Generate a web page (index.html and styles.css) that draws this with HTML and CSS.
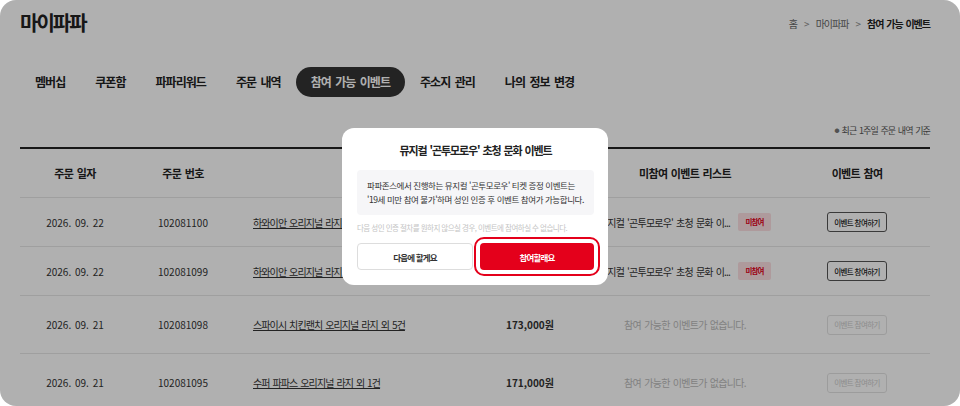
FILE: index.html
```html
<!DOCTYPE html>
<html lang="ko">
<head>
<meta charset="UTF-8">
<title>마이파파 - 참여 가능 이벤트</title>
<link rel="stylesheet" href="styles.css">
</head>
<body>
  <div class="screen">
    <div class="page">
      <div class="top">
        <h1>마이파파</h1>
        <div class="crumbs">
          <span>홈</span><i>&gt;</i><span>마이파파</span><i>&gt;</i><strong>참여 가능 이벤트</strong>
        </div>
      </div>

      <ul class="tabs">
        <li>멤버십</li>
        <li>쿠폰함</li>
        <li>파파리워드</li>
        <li>주문 내역</li>
        <li class="on">참여 가능 이벤트</li>
        <li>주소지 관리</li>
        <li>나의 정보 변경</li>
      </ul>

      <p class="note"><span class="dot">●</span>최근 1주일 주문 내역 기준</p>

      <div class="orders">
        <div class="row head">
          <div>주문 일자</div>
          <div>주문 번호</div>
          <div>주문 상품</div>
          <div>결제 금액</div>
          <div>미참여 이벤트 리스트</div>
          <div class="act">이벤트 참여</div>
        </div>
        <div class="row">
          <div>2026. 09. 22</div>
          <div>102081100</div>
          <div class="item"><a href="#">하와이안 오리지널 라지 외 2건</a></div>
          <div class="price">52,000원</div>
          <div class="event"><span class="ev-name">뮤지컬 '곤투모로우' 초청 문화 이...</span><span class="badge">미참여</span></div>
          <div class="act"><button class="join">이벤트 참여하기</button></div>
        </div>
        <div class="row">
          <div>2026. 09. 22</div>
          <div>102081099</div>
          <div class="item"><a href="#">하와이안 오리지널 라지 외 1건</a></div>
          <div class="price">48,000원</div>
          <div class="event"><span class="ev-name">뮤지컬 '곤투모로우' 초청 문화 이...</span><span class="badge">미참여</span></div>
          <div class="act"><button class="join">이벤트 참여하기</button></div>
        </div>
        <div class="row empty">
          <div>2026. 09. 21</div>
          <div>102081098</div>
          <div class="item"><a href="#">스파이시 치킨랜치 오리지널 라지 외 5건</a></div>
          <div class="price">173,000원</div>
          <div class="event none">참여 가능한 이벤트가 없습니다.</div>
          <div class="act"><button class="join" disabled>이벤트 참여하기</button></div>
        </div>
        <div class="row empty">
          <div>2026. 09. 21</div>
          <div>102081095</div>
          <div class="item"><a href="#">수퍼 파파스 오리지널 라지 외 1건</a></div>
          <div class="price">171,000원</div>
          <div class="event none">참여 가능한 이벤트가 없습니다.</div>
          <div class="act"><button class="join" disabled>이벤트 참여하기</button></div>
        </div>
      </div>
    </div>

    <div class="dim"></div>

    <div class="modal">
      <h2>뮤지컬 '곤투모로우' 초청 문화 이벤트</h2>
      <div class="modal-box">
        <p>파파존스에서 진행하는 뮤지컬 '곤투모로우' 티켓 증정 이벤트는<br>'19세 미만 참여 불가'하며 성인 인증 후 이벤트 참여가 가능합니다.</p>
      </div>
      <p class="modal-note">다음 성인 인증 절차를 원하지 않으실 경우, 이벤트에 참여하실 수 없습니다.</p>
      <div class="modal-btns">
        <button class="btn-line">다음에 할게요</button>
        <button class="btn-red">참여할래요</button>
      </div>
    </div>
  </div>
</body>
</html>
```

FILE: styles.css
```css
* { box-sizing: border-box; }
html, body {
  margin: 0;
  background: #fff;
}
body {
  font-family: "Noto Sans CJK KR", sans-serif;
  color: #222;
  word-spacing: 1px;
}
.screen {
  position: relative;
  width: 960px;
  height: 406px;
  overflow: hidden;
  border-radius: 16px;
  background: #fff;
}
.page { padding: 9px 30px 0 20px; }

/* title + breadcrumb */
.top {
  display: flex;
  justify-content: space-between;
  align-items: center;
}
.top h1 {
  margin: 0;
  font-size: 20px;
  line-height: 28px;
  font-weight: 700;
  letter-spacing: -0.1em;
}
.crumbs {
  display: flex;
  align-items: center;
  gap: 7px;
  font-size: 10px;
  color: #666;
  letter-spacing: -0.1em;
}
.crumbs i { font-style: normal; color: #888; }
.crumbs strong { color: #222; }

/* tabs */
.tabs {
  display: flex;
  list-style: none;
  margin: 30px 0 0;
  padding: 0;
}
.tabs li {
  height: 30px;
  padding: 0 15px;
  border-radius: 15px;
  font-size: 12px;
  line-height: 30px;
  font-weight: 700;
  letter-spacing: -0.08em;
  word-spacing: 2px;
}
.tabs li.on { background: #333; color: #fff; }

.note {
  margin: 26px 0 0;
  text-align: right;
  font-size: 9px;
  line-height: 14px;
  color: #555;
  letter-spacing: -0.1em;
  word-spacing: 1px;
}
.note .dot {
  margin-right: 3px;
  font-size: 5px;
  vertical-align: 2px;
  color: #777;
}

/* order table */
.orders {
  margin-top: 9px;
  border-top: 2px solid #222;
}
.row {
  display: grid;
  grid-template-columns: 110px 106px 254px 80px 230px 130px;
  align-items: center;
  height: 49px;
  border-bottom: 1px solid #e6e6e6;
  font-size: 10px;
  text-align: center;
  color: #333;
}
.row.empty { height: 58px; }
.row.head {
  font-size: 11px;
  font-weight: 700;
  color: #222;
  letter-spacing: -0.06em;
}
.act { padding-right: 16px; }
.item { text-align: left; padding-left: 17px; letter-spacing: -0.09em; }
.item a { color: #333; }
.price { font-weight: 700; }
.event {
  display: flex;
  justify-content: center;
  align-items: center;
  gap: 8px;
  letter-spacing: -0.08em;
}
.event.none { color: #bbb; letter-spacing: -0.07em; }
.badge {
  width: 33px;
  height: 18px;
  line-height: 18px;
  border-radius: 2px;
  background: #fde0e2;
  color: #e2001b;
  font-size: 7.5px;
  font-weight: 700;
}
.join {
  width: 60px;
  height: 20px;
  padding: 0;
  border: 1px solid #555;
  border-radius: 3px;
  background: #fff;
  color: #222;
  font-family: inherit;
  font-size: 7.5px;
  font-weight: 500;
  letter-spacing: -0.08em;
}
.join:disabled { border-color: #e3e3e3; color: #ccc; font-weight: 400; }

/* popup */
.dim {
  position: absolute;
  inset: 0;
  background: rgba(0, 0, 0, 0.31);
}
.modal {
  position: absolute;
  left: 342px;
  top: 128px;
  width: 266px;
  padding: 14px 14px 15px 15px;
  border-radius: 12px;
  background: #fff;
}
.modal h2 {
  margin: 0;
  font-size: 11px;
  line-height: 16px;
  text-align: center;
  letter-spacing: -0.1em;
}
.modal-box {
  margin-top: 12px;
  padding: 9px 10px;
  border-radius: 4px;
  background: #f6f6f8;
}
.modal-box p {
  margin: 0;
  font-size: 8.5px;
  line-height: 13.5px;
  color: #333;
  letter-spacing: -0.05em;
  word-spacing: 0;
}
.modal-note {
  margin: 7px 0 0;
  font-size: 7.5px;
  line-height: 12px;
  color: #c4c4c4;
  letter-spacing: -0.07em;
  word-spacing: 0;
}
.modal-btns {
  display: flex;
  gap: 7px;
  margin-top: 9px;
}
.modal-btns button {
  flex: 1;
  height: 27px;
  border-radius: 4px;
  font-family: inherit;
  font-size: 8.5px;
  font-weight: 700;
  letter-spacing: -0.1em;
}
.btn-line {
  border: 1px solid #ddd;
  background: #fff;
  color: #333;
}
.btn-red {
  border: 0;
  background: #e4001b;
  color: #fff;
  outline: 2px solid #e4001b;
  outline-offset: 4px;
}
```
